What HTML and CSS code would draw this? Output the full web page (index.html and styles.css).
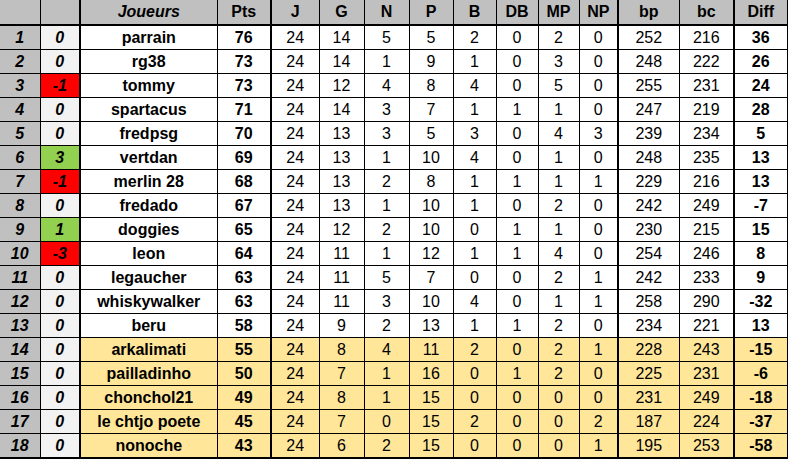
FILE: index.html
```html
<!DOCTYPE html>
<html>
<head>
<meta charset="utf-8">
<link rel="stylesheet" href="styles.css">
</head>
<body>
<table class="standings">
<colgroup>
<col class="c-rank"><col class="c-chg"><col class="c-name"><col class="c-pts"><col class="c-j"><col class="c-g"><col class="c-n"><col class="c-p"><col class="c-b"><col class="c-db"><col class="c-mp"><col class="c-np"><col class="c-bp"><col class="c-bc"><col class="c-diff">
</colgroup>
<thead>
<tr>
<th class="rank"></th><th class="chg"></th><th class="name"><i>Joueurs</i></th><th class="pts">Pts</th><th>J</th><th>G</th><th>N</th><th>P</th><th>B</th><th>DB</th><th>MP</th><th class="np">NP</th><th>bp</th><th class="bc">bc</th><th>Diff</th>
</tr>
</thead>
<tbody>
<tr><td class="rank">1</td><td class="chg">0</td><td class="name">parrain</td><td class="pts">76</td><td>24</td><td>14</td><td>5</td><td>5</td><td>2</td><td>0</td><td>2</td><td class="np">0</td><td>252</td><td class="bc">216</td><td class="diff">36</td></tr>
<tr><td class="rank">2</td><td class="chg">0</td><td class="name">rg38</td><td class="pts">73</td><td>24</td><td>14</td><td>1</td><td>9</td><td>1</td><td>0</td><td>3</td><td class="np">0</td><td>248</td><td class="bc">222</td><td class="diff">26</td></tr>
<tr><td class="rank">3</td><td class="chg down">-1</td><td class="name">tommy</td><td class="pts">73</td><td>24</td><td>12</td><td>4</td><td>8</td><td>4</td><td>0</td><td>5</td><td class="np">0</td><td>255</td><td class="bc">231</td><td class="diff">24</td></tr>
<tr><td class="rank">4</td><td class="chg">0</td><td class="name">spartacus</td><td class="pts">71</td><td>24</td><td>14</td><td>3</td><td>7</td><td>1</td><td>1</td><td>1</td><td class="np">0</td><td>247</td><td class="bc">219</td><td class="diff">28</td></tr>
<tr><td class="rank">5</td><td class="chg">0</td><td class="name">fredpsg</td><td class="pts">70</td><td>24</td><td>13</td><td>3</td><td>5</td><td>3</td><td>0</td><td>4</td><td class="np">3</td><td>239</td><td class="bc">234</td><td class="diff">5</td></tr>
<tr><td class="rank">6</td><td class="chg up">3</td><td class="name">vertdan</td><td class="pts">69</td><td>24</td><td>13</td><td>1</td><td>10</td><td>4</td><td>0</td><td>1</td><td class="np">0</td><td>248</td><td class="bc">235</td><td class="diff">13</td></tr>
<tr><td class="rank">7</td><td class="chg down">-1</td><td class="name">merlin 28</td><td class="pts">68</td><td>24</td><td>13</td><td>2</td><td>8</td><td>1</td><td>1</td><td>1</td><td class="np">1</td><td>229</td><td class="bc">216</td><td class="diff">13</td></tr>
<tr><td class="rank">8</td><td class="chg">0</td><td class="name">fredado</td><td class="pts">67</td><td>24</td><td>13</td><td>1</td><td>10</td><td>1</td><td>0</td><td>2</td><td class="np">0</td><td>242</td><td class="bc">249</td><td class="diff">-7</td></tr>
<tr><td class="rank">9</td><td class="chg up">1</td><td class="name">doggies</td><td class="pts">65</td><td>24</td><td>12</td><td>2</td><td>10</td><td>0</td><td>1</td><td>1</td><td class="np">0</td><td>230</td><td class="bc">215</td><td class="diff">15</td></tr>
<tr><td class="rank">10</td><td class="chg down">-3</td><td class="name">leon</td><td class="pts">64</td><td>24</td><td>11</td><td>1</td><td>12</td><td>1</td><td>1</td><td>4</td><td class="np">0</td><td>254</td><td class="bc">246</td><td class="diff">8</td></tr>
<tr><td class="rank">11</td><td class="chg">0</td><td class="name">legaucher</td><td class="pts">63</td><td>24</td><td>11</td><td>5</td><td>7</td><td>0</td><td>0</td><td>2</td><td class="np">1</td><td>242</td><td class="bc">233</td><td class="diff">9</td></tr>
<tr><td class="rank">12</td><td class="chg">0</td><td class="name">whiskywalker</td><td class="pts">63</td><td>24</td><td>11</td><td>3</td><td>10</td><td>4</td><td>0</td><td>1</td><td class="np">1</td><td>258</td><td class="bc">290</td><td class="diff">-32</td></tr>
<tr><td class="rank">13</td><td class="chg">0</td><td class="name">beru</td><td class="pts">58</td><td>24</td><td>9</td><td>2</td><td>13</td><td>1</td><td>1</td><td>2</td><td class="np">0</td><td>234</td><td class="bc">221</td><td class="diff">13</td></tr>
<tr class="zone"><td class="rank">14</td><td class="chg">0</td><td class="name">arkalimati</td><td class="pts">55</td><td>24</td><td>8</td><td>4</td><td>11</td><td>2</td><td>0</td><td>2</td><td class="np">1</td><td>228</td><td class="bc">243</td><td class="diff">-15</td></tr>
<tr class="zone"><td class="rank">15</td><td class="chg">0</td><td class="name">pailladinho</td><td class="pts">50</td><td>24</td><td>7</td><td>1</td><td>16</td><td>0</td><td>1</td><td>2</td><td class="np">0</td><td>225</td><td class="bc">231</td><td class="diff">-6</td></tr>
<tr class="zone"><td class="rank">16</td><td class="chg">0</td><td class="name">chonchol21</td><td class="pts">49</td><td>24</td><td>8</td><td>1</td><td>15</td><td>0</td><td>0</td><td>0</td><td class="np">0</td><td>231</td><td class="bc">249</td><td class="diff">-18</td></tr>
<tr class="zone"><td class="rank">17</td><td class="chg">0</td><td class="name">le chtjo poete</td><td class="pts">45</td><td>24</td><td>7</td><td>0</td><td>15</td><td>2</td><td>0</td><td>0</td><td class="np">2</td><td>187</td><td class="bc">224</td><td class="diff">-37</td></tr>
<tr class="zone last"><td class="rank">18</td><td class="chg">0</td><td class="name">nonoche</td><td class="pts">43</td><td>24</td><td>6</td><td>2</td><td>15</td><td>0</td><td>0</td><td>0</td><td class="np">1</td><td>195</td><td class="bc">253</td><td class="diff">-58</td></tr>
</tbody>
</table>
</body>
</html>
```

FILE: styles.css
```css
html, body {
  margin: 0;
  padding: 0;
  background: #ffffff;
  overflow: hidden;
}

.standings {
  border-collapse: collapse;
  table-layout: fixed;
  width: 787px;
  font-family: "Liberation Sans", Arial, sans-serif;
  font-size: 16px;
  color: #000;
}

.c-rank { width: 40px; }
.c-chg { width: 40px; }
.c-name { width: 137px; }
.c-pts { width: 54px; }
.c-j { width: 48px; }
.c-g { width: 45px; }
.c-n { width: 45px; }
.c-p { width: 44px; }
.c-b { width: 43px; }
.c-db { width: 42px; }
.c-mp { width: 41px; }
.c-np { width: 39px; }
.c-bp { width: 61px; }
.c-bc { width: 55px; }
.c-diff { width: 53px; }

.standings th,
.standings td {
  height: 23px;
  padding: 0;
  text-align: center;
  vertical-align: middle;
  border: 1px solid #000;
  line-height: 18px;
  white-space: nowrap;
  overflow: hidden;
}

.standings th {
  height: 24px;
  background: #c0c0c0;
  font-weight: bold;
  border-top: none;
  border-bottom: 2px solid #000;
}

.standings tr > :first-child { border-left: none; }

.standings .chg { border-right: 2px solid #000; }
.standings .pts { border-right: 2px solid #000; font-weight: bold; }
.standings .np { border-right: 2px solid #000; }
.standings .bc { border-right: 2px solid #000; }

.standings td.rank {
  background: #c0c0c0;
  font-weight: bold;
  font-style: italic;
}

.standings td.chg {
  background: #f2f2f2;
  font-weight: bold;
  font-style: italic;
}

.standings td.chg.down { background: #ff0000; }
.standings td.chg.up { background: #92d050; }

.standings td.name { font-weight: bold; }
.standings td.diff { font-weight: bold; }

.standings tr.zone td { background: #ffe699; }
.standings tr.zone td.rank { background: #c0c0c0; }
.standings tr.zone td.chg { background: #f2f2f2; }

.standings tr.last td { border-bottom: 2px solid #000; }
```
